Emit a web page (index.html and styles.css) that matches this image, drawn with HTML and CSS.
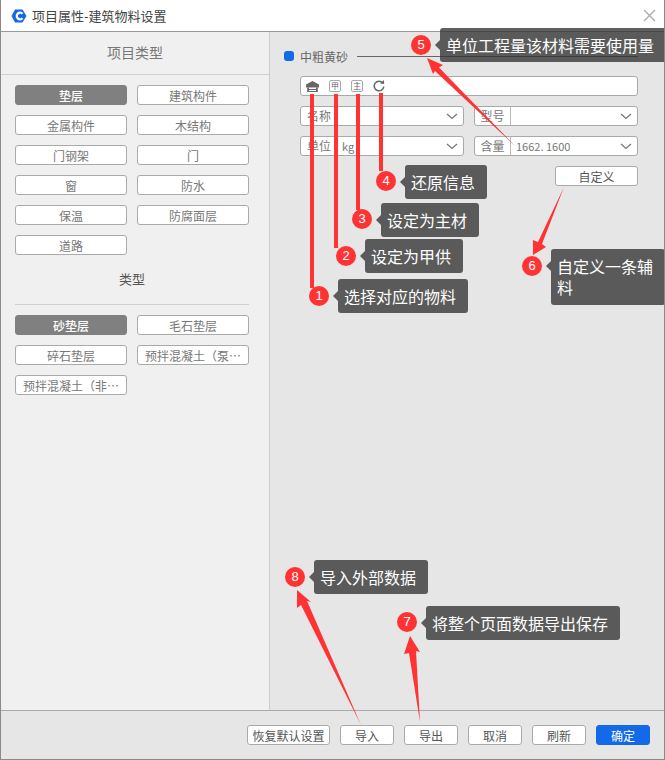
FILE: index.html
```html
<!DOCTYPE html>
<html lang="zh-CN">
<head>
  <meta charset="UTF-8">
  <title>项目属性-建筑物料设置</title>
  <link rel="stylesheet" href="styles.css">
</head>
<body>
  <div class="window">

    <!-- title bar -->
    <div class="titlebar">
      <svg class="logo" width="16" height="14" viewBox="0 0 16 14">
        <path d="M4 0.5 H11.5 L15.5 7 L11.5 13.5 H4 L0.5 7 Z" fill="#1469e8"/>
        <path d="M11.5 4.8 A3.3 3.3 0 1 0 11.5 9.2" fill="none" stroke="#fff" stroke-width="2.2"/>
      </svg>
      <span class="titlebar-text">项目属性-建筑物料设置</span>
      <svg class="close" width="13" height="13" viewBox="0 0 13 13">
        <path d="M1 1 L12 12 M12 1 L1 12" stroke="#aaa" stroke-width="1.3"/>
      </svg>
    </div>

    <div class="main">
      <!-- left: types -->
      <div class="sidebar">
        <div class="sidebar-title">项目类型</div>
        <div class="tag-grid">
          <div class="tag active">垫层</div>
          <div class="tag">建筑构件</div>
          <div class="tag">金属构件</div>
          <div class="tag">木结构</div>
          <div class="tag">门钢架</div>
          <div class="tag">门</div>
          <div class="tag">窗</div>
          <div class="tag">防水</div>
          <div class="tag">保温</div>
          <div class="tag">防腐面层</div>
          <div class="tag">道路</div>
        </div>
        <div class="sub-title">类型</div>
        <div class="tag-grid">
          <div class="tag active">砂垫层</div>
          <div class="tag">毛石垫层</div>
          <div class="tag">碎石垫层</div>
          <div class="tag">预拌混凝土（泵…</div>
          <div class="tag">预拌混凝土（非…</div>
        </div>
      </div>

      <!-- right: material form -->
      <div class="content">
        <div class="material-head">
          <span class="dot"></span>
          <span class="material-name">中粗黄砂</span>
          <span class="material-line"></span>
        </div>
        <div class="form">
          <div class="toolbar">
            <svg width="13" height="11" viewBox="0 0 13 11">
              <path d="M6.5 0 L13 3.4 V6.4 H0 V3.4 Z" fill="#666"/>
              <path d="M1.2 6.4 H3 V11 H1.2 Z M10 6.4 H11.8 V11 H10 Z M3 8 H10 V9 H3 Z M3 10 H10 V11 H3 Z" fill="#666"/>
            </svg>
            <span class="mini-tag">甲</span>
            <span class="mini-tag">主</span>
            <svg width="12" height="12" viewBox="0 0 12 12">
              <path d="M9.8 3 A4.8 4.8 0 1 0 10.8 6.5" fill="none" stroke="#666" stroke-width="1.5"/>
              <path d="M7.2 3.6 L11.2 4 L10.8 0 Z" fill="#666"/>
            </svg>
          </div>
          <div class="form-row">
            <div class="field">
              <span class="field-label plain">名称</span>
              <span class="field-value"></span>
              <svg class="chevron" width="12" height="7" viewBox="0 0 12 7"><path d="M1 1 L6 5.5 L11 1" fill="none" stroke="#777" stroke-width="1.3"/></svg>
            </div>
            <div class="field">
              <span class="field-label">型号</span>
              <span class="field-value"></span>
              <svg class="chevron" width="12" height="7" viewBox="0 0 12 7"><path d="M1 1 L6 5.5 L11 1" fill="none" stroke="#777" stroke-width="1.3"/></svg>
            </div>
          </div>
          <div class="form-row">
            <div class="field">
              <span class="field-label plain">单位</span>
              <span class="field-value">kg</span>
              <svg class="chevron" width="12" height="7" viewBox="0 0 12 7"><path d="M1 1 L6 5.5 L11 1" fill="none" stroke="#777" stroke-width="1.3"/></svg>
            </div>
            <div class="field">
              <span class="field-label">含量</span>
              <span class="field-value">1662. 1600</span>
              <svg class="chevron" width="12" height="7" viewBox="0 0 12 7"><path d="M1 1 L6 5.5 L11 1" fill="none" stroke="#777" stroke-width="1.3"/></svg>
            </div>
          </div>
          <div class="form-actions">
            <div class="btn custom">自定义</div>
          </div>
        </div>
      </div>
    </div>

    <!-- footer -->
    <div class="footer">
      <div class="btn wide">恢复默认设置</div>
      <div class="btn">导入</div>
      <div class="btn">导出</div>
      <div class="btn">取消</div>
      <div class="btn">刷新</div>
      <div class="btn primary">确定</div>
    </div>

    <!-- annotations drawn over the screenshot -->
    <svg class="arrows" width="665" height="760" viewBox="0 0 665 760">
      <g fill="#ff3333">
        <rect x="310" y="94" width="4" height="194"/>
        <rect x="334" y="94" width="4" height="154"/>
        <rect x="356" y="94" width="4" height="116"/>
        <rect x="379" y="93" width="4" height="78"/>
        <path d="M427 58 L443 65 L439 67.5 L515 146 L435 71 L433 74 Z"/>
        <path d="M564 187 L542 244 L546 247 L533 255 L533 240 L538 242 Z"/>
        <path d="M410 636 L420 652 L416 651 L420 722 L409 653 L404 654 Z"/>
        <path d="M297 590 L311 602 L307 601 L361 725 L301 605 L297 608 Z"/>
      </g>
    </svg>

    <div class="badge b1">1</div>
    <div class="badge b2">2</div>
    <div class="badge b3">3</div>
    <div class="badge b4">4</div>
    <div class="badge b5">5</div>
    <div class="badge b6">6</div>
    <div class="badge b7">7</div>
    <div class="badge b8">8</div>

    <div class="note n1">选择对应的物料</div>
    <div class="note n2">设定为甲供</div>
    <div class="note n3">设定为主材</div>
    <div class="note n4">还原信息</div>
    <div class="note n5">单位工程量该材料需要使用量</div>
    <div class="note n6">自定义一条辅料</div>
    <div class="note n7">将整个页面数据导出保存</div>
    <div class="note n8">导入外部数据</div>
  </div>
</body>
</html>
```

FILE: styles.css
```css
* {
  margin: 0;
  padding: 0;
  box-sizing: border-box;
}

body {
  font-family: "Noto Sans CJK SC", "Liberation Sans", sans-serif;
  font-size: 12px;
  color: #666;
  background-color: #fff;
  overflow: hidden;
}

.window {
  position: relative;
  width: 665px;
  height: 760px;
  display: flex;
  flex-direction: column;
  overflow: hidden;
  border-left: 1px solid #8a8a8a;
  border-bottom: 1px solid #8a8a8a;
  border-right: 1px solid #8a8a8a;
}

/* title bar */
.titlebar {
  height: 32px;
  flex: none;
  display: flex;
  align-items: center;
  padding-left: 10px;
  padding-right: 8px;
  background-color: #fff;
  border-bottom: 1px solid #999;
}

.logo {
  margin-right: 5px;
}

.titlebar-text {
  font-size: 13px;
  color: #444;
}

.close {
  margin-left: auto;
}

.main {
  flex: 1;
  display: flex;
  min-height: 0;
}

/* left panel */
.sidebar {
  width: 269px;
  flex: none;
  background-color: #f0f0f0;
  border-right: 1px solid #ccc;
}

.sidebar-title {
  height: 43px;
  line-height: 40px;
  text-align: center;
  font-size: 14px;
  color: #777;
  border-bottom: 1px solid #d0d0d0;
}

.sub-title {
  width: 234px;
  height: 40px;
  margin-left: 14px;
  margin-top: 10px;
  line-height: 28px;
  text-align: center;
  font-size: 13px;
  color: #555;
  border-bottom: 1px solid #d0d0d0;
}

.tag-grid {
  display: grid;
  grid-template-columns: 112px 112px;
  grid-auto-rows: 20px;
  gap: 10px;
  padding: 10px 0 0 14px;
}

.tag {
  display: flex;
  align-items: center;
  justify-content: center;
  background-color: #fff;
  border: 1px solid #aaa;
  border-radius: 3px;
  color: #777;
  white-space: nowrap;
  overflow: hidden;
}

.tag.active {
  background-color: #808080;
  border-color: #808080;
  color: #fff;
  font-weight: 500;
}

/* right panel */
.content {
  flex: 1;
  background-color: #e6e6e6;
  padding-top: 16px;
}

.material-head {
  display: flex;
  align-items: center;
  height: 16px;
  padding-left: 14px;
}

.dot {
  width: 10px;
  height: 10px;
  border-radius: 3px;
  background-color: #1469e8;
  margin-right: 6px;
}

.material-name {
  color: #666;
}

.material-line {
  width: 281px;
  height: 1px;
  margin-left: 9px;
  background-color: #666;
}

.form {
  width: 338px;
  margin-left: 30px;
  margin-top: 12px;
  display: flex;
  flex-direction: column;
  gap: 10px;
}

.toolbar {
  height: 20px;
  display: flex;
  align-items: center;
  gap: 10px;
  padding-left: 5px;
  background-color: #fff;
  border: 1px solid #aaa;
  border-radius: 3px;
}

.mini-tag {
  width: 12px;
  height: 12px;
  display: flex;
  align-items: center;
  justify-content: center;
  font-size: 8px;
  line-height: 1;
  color: #666;
  background-color: #fff;
  border: 1px solid #aaa;
  border-radius: 2px;
}

.form-row {
  display: grid;
  grid-template-columns: 164px 164px;
  gap: 10px;
}

.field {
  height: 20px;
  display: flex;
  align-items: center;
  background-color: #fff;
  border: 1px solid #aaa;
  border-radius: 3px;
  padding-right: 5px;
}

.field-label {
  width: 36px;
  height: 18px;
  flex: none;
  line-height: 18px;
  text-align: center;
  color: #777;
  border-right: 1px solid #bbb;
}

.field-label.plain {
  border-right: none;
}

.field-value {
  flex: 1;
  padding-left: 5px;
  font-size: 11px;
  color: #777;
}

.form-actions {
  display: flex;
  justify-content: flex-end;
}

/* buttons */
.btn {
  width: 54px;
  height: 20px;
  display: flex;
  align-items: center;
  justify-content: center;
  background-color: #fff;
  border: 1px solid #aaa;
  border-radius: 3px;
  color: #555;
  white-space: nowrap;
}

.btn.custom {
  width: 83px;
}

.btn.wide {
  width: 83px;
}

.btn.primary {
  background-color: #1469e8;
  border-color: #1469e8;
  color: #fff;
}

.footer {
  height: 49px;
  flex: none;
  display: flex;
  align-items: center;
  gap: 10px;
  padding-left: 246px;
  background-color: #e6e6e6;
  border-top: 1px solid #aaa;
}

/* annotations */
.arrows {
  position: absolute;
  left: -1px;
  top: 0;
}

.badge {
  position: absolute;
  width: 20px;
  height: 20px;
  border-radius: 50%;
  background-color: #ff3333;
  color: #fff;
  font-family: "Liberation Sans", sans-serif;
  font-size: 13px;
  line-height: 20px;
  text-align: center;
}

.b1 { left: 308px; top: 286px; }
.b2 { left: 335px; top: 246px; }
.b3 { left: 351px; top: 209px; }
.b4 { left: 375px; top: 171px; }
.b5 { left: 410px; top: 35px; }
.b6 { left: 521px; top: 256px; }
.b7 { left: 396px; top: 612px; }
.b8 { left: 284px; top: 567px; }

.note {
  position: absolute;
  padding: 0 6px;
  height: 34px;
  line-height: 34px;
  border-radius: 3px;
  background-color: rgba(50, 50, 50, 0.78);
  color: #fff;
  font-size: 16px;
  white-space: nowrap;
}

/* little pointer on the left of each note */
.note::before {
  content: "";
  position: absolute;
  left: -5px;
  top: 12px;
  border-top: 5px solid transparent;
  border-bottom: 5px solid transparent;
  border-right: 5px solid rgba(50, 50, 50, 0.78);
}

.n1 { left: 337px; top: 279px; width: 130px; }
.n2 { left: 364px; top: 239px; width: 98px; }
.n3 { left: 380px; top: 203px; width: 98px; }
.n4 { left: 404px; top: 165px; width: 82px; }
.n5 { left: 439px; top: 28px; width: 226px; }
.n6 { left: 550px; top: 249px; width: 114px; height: 56px; padding-top: 7px; line-height: 21px; white-space: normal; }
.n7 { left: 425px; top: 606px; width: 194px; }
.n8 { left: 313px; top: 560px; width: 114px; }
```
